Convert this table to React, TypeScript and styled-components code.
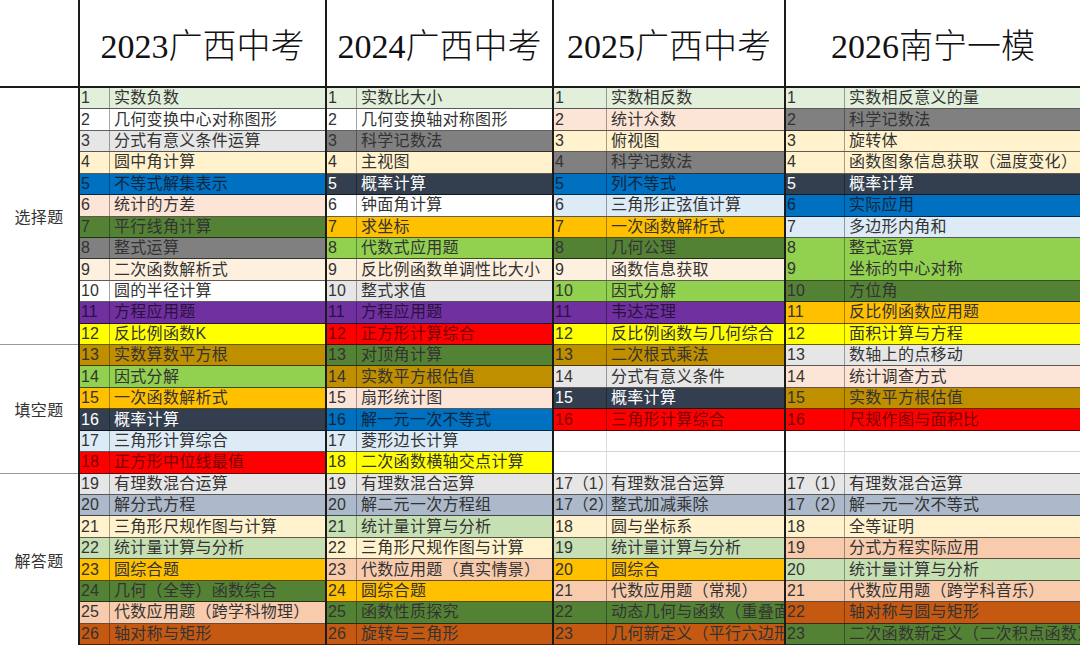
import React from "react";
import styled, { createGlobalStyle } from "styled-components";

const GlobalStyle = createGlobalStyle`
  html, body {
    margin: 0;
    padding: 0;
    background: #fff;
  }
  body {
    font-family: "Liberation Sans", "Noto Sans CJK SC", sans-serif;
    color: #333;
  }
`;

const fills: Record<string, string> = {
  lg: "#e2efda",
  w: "#ffffff",
  gy: "#e7e6e6",
  ly: "#fff2cc",
  bl: "#0070c0",
  pk: "#fce4d6",
  dg: "#548235",
  g: "#808080",
  cr: "#fdf0df",
  pu: "#7030a0",
  ye: "#ffff00",
  au: "#bf8f00",
  gr: "#92d050",
  or: "#ffc000",
  sl: "#333f4f",
  lb: "#ddebf7",
  re: "#ff0000",
  bg: "#acb9ca",
  mg: "#c6e0b4",
  sa: "#f8cbad",
  br: "#c65911",
};

const inks: Record<string, string> = {
  sl: "#ffffff",
  re: "#7a0000",
  pu: "#2a1240",
  bl: "#10263d",
};

type Item = {
  n: string[];
  t: string[];
  c: string;
  span?: number;
  empty?: boolean;
  soft?: boolean;
};

const r = (n: string, t: string, c: string): Item => ({ n: [n], t: [t], c });
const blank = (soft: boolean): Item => ({ n: [""], t: [""], c: "w", empty: true, soft });

const groups: { title: string; numW: number; rows: Item[] }[] = [
  {
    title: "2023广西中考",
    numW: 30,
    rows: [
      r("1", "实数负数", "lg"),
      r("2", "几何变换中心对称图形", "w"),
      r("3", "分式有意义条件运算", "gy"),
      r("4", "圆中角计算", "ly"),
      r("5", "不等式解集表示", "bl"),
      r("6", "统计的方差", "pk"),
      r("7", "平行线角计算", "dg"),
      r("8", "整式运算", "g"),
      r("9", "二次函数解析式", "cr"),
      r("10", "圆的半径计算", "w"),
      r("11", "方程应用题", "pu"),
      r("12", "反比例函数K", "ye"),
      r("13", "实数算数平方根", "au"),
      r("14", "因式分解", "gr"),
      r("15", "一次函数解析式", "or"),
      r("16", "概率计算", "sl"),
      r("17", "三角形计算综合", "lb"),
      r("18", "正方形中位线最值", "re"),
      r("19", "有理数混合运算", "gy"),
      r("20", "解分式方程", "bg"),
      r("21", "三角形尺规作图与计算", "ly"),
      r("22", "统计量计算与分析", "mg"),
      r("23", "圆综合题", "or"),
      r("24", "几何（全等）函数综合", "dg"),
      r("25", "代数应用题（跨学科物理）", "sa"),
      r("26", "轴对称与矩形", "br"),
    ],
  },
  {
    title: "2024广西中考",
    numW: 30,
    rows: [
      r("1", "实数比大小", "lg"),
      r("2", "几何变换轴对称图形", "w"),
      r("3", "科学记数法", "g"),
      r("4", "主视图", "ly"),
      r("5", "概率计算", "sl"),
      r("6", "钟面角计算", "w"),
      r("7", "求坐标", "or"),
      r("8", "代数式应用题", "gr"),
      r("9", "反比例函数单调性比大小", "cr"),
      r("10", "整式求值", "gy"),
      r("11", "方程应用题", "pu"),
      r("12", "正方形计算综合", "re"),
      r("13", "对顶角计算", "dg"),
      r("14", "实数平方根估值", "au"),
      r("15", "扇形统计图", "pk"),
      r("16", "解一元一次不等式", "bl"),
      r("17", "菱形边长计算", "lb"),
      r("18", "二次函数横轴交点计算", "ye"),
      r("19", "有理数混合运算", "gy"),
      r("20", "解二元一次方程组", "bg"),
      r("21", "统计量计算与分析", "mg"),
      r("22", "三角形尺规作图与计算", "ly"),
      r("23", "代数应用题（真实情景）", "sa"),
      r("24", "圆综合题", "or"),
      r("25", "函数性质探究", "dg"),
      r("26", "旋转与三角形", "br"),
    ],
  },
  {
    title: "2025广西中考",
    numW: 53,
    rows: [
      r("1", "实数相反数", "lg"),
      r("2", "统计众数", "pk"),
      r("3", "俯视图", "ly"),
      r("4", "科学记数法", "g"),
      r("5", "列不等式", "bl"),
      r("6", "三角形正弦值计算", "lb"),
      r("7", "一次函数解析式", "or"),
      r("8", "几何公理", "dg"),
      r("9", "函数信息获取", "cr"),
      r("10", "因式分解", "gr"),
      r("11", "韦达定理", "pu"),
      r("12", "反比例函数与几何综合", "ye"),
      r("13", "二次根式乘法", "au"),
      r("14", "分式有意义条件", "gy"),
      r("15", "概率计算", "sl"),
      r("16", "三角形计算综合", "re"),
      blank(true),
      blank(false),
      r("17（1）", "有理数混合运算", "gy"),
      r("17（2）", "整式加减乘除", "bg"),
      r("18", "圆与坐标系", "ly"),
      r("19", "统计量计算与分析", "mg"),
      r("20", "圆综合", "or"),
      r("21", "代数应用题（常规）", "sa"),
      r("22", "动态几何与函数（重叠面积）", "dg"),
      r("23", "几何新定义（平行六边形）", "br"),
    ],
  },
  {
    title: "2026南宁一模",
    numW: 59,
    rows: [
      r("1", "实数相反意义的量", "lg"),
      r("2", "科学记数法", "g"),
      r("3", "旋转体", "ly"),
      r("4", "函数图象信息获取（温度变化）", "ly"),
      r("5", "概率计算", "sl"),
      r("6", "实际应用", "bl"),
      r("7", "多边形内角和", "lb"),
      { n: ["8", "9"], t: ["整式运算", "坐标的中心对称"], c: "gr", span: 2 },
      r("10", "方位角", "dg"),
      r("11", "反比例函数应用题", "or"),
      r("12", "面积计算与方程", "ye"),
      r("13", "数轴上的点移动", "gy"),
      r("14", "统计调查方式", "pk"),
      r("15", "实数平方根估值", "au"),
      r("16", "尺规作图与面积比", "re"),
      blank(true),
      blank(false),
      r("17（1）", "有理数混合运算", "gy"),
      r("17（2）", "解一元一次不等式", "bg"),
      r("18", "全等证明", "ly"),
      r("19", "分式方程实际应用", "sa"),
      r("20", "统计量计算与分析", "mg"),
      r("21", "代数应用题（跨学科音乐）", "sa"),
      r("22", "轴对称与圆与矩形", "br"),
      r("23", "二次函数新定义（二次积点函数）", "dg"),
    ],
  },
];

const sections = [
  { label: "选择题", rows: 12 },
  { label: "填空题", rows: 6 },
  { label: "解答题", rows: 8 },
];

const Sheet = styled.div`
  width: 1080px;
  height: 645px;
  display: grid;
  grid-template-columns: 78px 247px 227px 232px 1fr;
  grid-template-rows: 88px 1fr;
  overflow: hidden;
  background: #fff;
`;

const Corner = styled.div`
  border-bottom: 2px solid #1b1b1b;
`;

const HeadCell = styled.div`
  display: flex;
  align-items: center;
  justify-content: center;
  padding-top: 1px;
  border-left: 2px solid #1b1b1b;
  border-bottom: 2px solid #1b1b1b;
  font-family: "Liberation Serif", "Noto Sans CJK SC", serif;
  font-size: 34px;
  font-weight: 300;
  color: #111;
  white-space: nowrap;
`;

const LabelCol = styled.div`
  display: flex;
  flex-direction: column;
`;

const Section = styled.div<{ $rows: number; $last: boolean }>`
  flex: ${(p) => p.$rows};
  display: flex;
  align-items: center;
  justify-content: center;
  border-bottom: ${(p) => (p.$last ? "none" : "1px solid #9a9a9a")};
  font-size: 16px;
  letter-spacing: 0.3px;
  color: #333;
`;

const BodyCol = styled.div`
  display: grid;
  grid-template-rows: repeat(26, 1fr);
  min-height: 0;
  border-left: 2px solid #1b1b1b;
`;

const Row = styled.div<{ $bg: string; $ink: string; $numW: number; $span: number; $soft: boolean }>`
  grid-row: span ${(p) => p.$span};
  display: grid;
  grid-template-columns: ${(p) => p.$numW}px 1fr;
  min-height: 0;
  overflow: hidden;
  background: ${(p) => p.$bg};
  color: ${(p) => p.$ink};
  border-bottom: 1px solid ${(p) => (p.$soft ? "#d6d6d6" : "rgba(0, 0, 0, 0.62)")};
`;

const NumCell = styled.div<{ $empty: boolean }>`
  display: flex;
  flex-direction: column;
  justify-content: space-around;
  padding-left: 1px;
  overflow: hidden;
  border-right: 1px solid ${(p) => (p.$empty ? "#dcdcdc" : "rgba(0, 0, 0, 0.35)")};
`;

const TextCell = styled.div`
  display: flex;
  flex-direction: column;
  justify-content: space-around;
  padding-left: 4px;
  overflow: hidden;
`;

const Line = styled.div`
  font-size: 16px;
  line-height: 20px;
  letter-spacing: 0.3px;
  white-space: nowrap;
`;

const NumLine = styled(Line)`
  letter-spacing: 0;
`;

export default function App() {
  return (
    <>
      <GlobalStyle />
      <Sheet>
        <Corner />
        {groups.map((g) => (
          <HeadCell key={g.title}>{g.title}</HeadCell>
        ))}
        <LabelCol>
          {sections.map((s, i) => (
            <Section key={s.label} $rows={s.rows} $last={i === sections.length - 1}>
              {s.label}
            </Section>
          ))}
        </LabelCol>
        {groups.map((g) => (
          <BodyCol key={g.title}>
            {g.rows.map((row, i) => (
              <Row
                key={i}
                $bg={fills[row.c]}
                $ink={inks[row.c] || "#333"}
                $numW={g.numW}
                $span={row.span || 1}
                $soft={!!row.soft}
              >
                <NumCell $empty={!!row.empty}>
                  {row.n.map((n, k) => (
                    <NumLine key={k}>{n}</NumLine>
                  ))}
                </NumCell>
                <TextCell>
                  {row.t.map((t, k) => (
                    <Line key={k}>{t}</Line>
                  ))}
                </TextCell>
              </Row>
            ))}
          </BodyCol>
        ))}
      </Sheet>
    </>
  );
}
